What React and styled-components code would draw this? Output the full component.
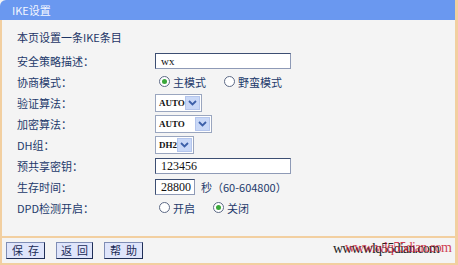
import React from "react";
import styled, { createGlobalStyle } from "styled-components";

const Global = createGlobalStyle`
  html, body { margin: 0; padding: 0; background: #f4f4f4; }
  body { font-family: "Noto Sans CJK SC", "Liberation Sans", sans-serif; }
`;

const Frame = styled.div`
  width: 458px;
  height: 265px;
  box-sizing: border-box;
  display: flex;
  flex-direction: column;
  background: #f4f4f4;
  border-right: 3px solid #f2cfa0;
  border-bottom: 2px solid #f2cfa0;
  overflow: hidden;
`;

const Header = styled.div`
  height: 20px;
  flex: none;
  background: #6a98f0;
  border-top-left-radius: 6px;
  color: #f4f7ff;
  font-size: 11px;
  line-height: 20px;
  padding-left: 12px;
`;

const Body = styled.div`
  flex: 1;
  border-left: 2px solid #f2cfa0;
  display: flex;
  flex-direction: column;
`;

const Content = styled.div`
  flex: 1;
  padding: 7px 0 0 15px;
`;

const Intro = styled.div`
  font-size: 11px;
  color: #1d3566;
  height: 20px;
  line-height: 20px;
  margin-bottom: 3px;
`;

const Form = styled.div`
  display: grid;
  grid-template-columns: 138px 1fr;
  grid-auto-rows: 21px;
  align-items: center;
`;

const Label = styled.div`
  font-size: 11px;
  color: #23396b;
  white-space: nowrap;
`;

const Cell = styled.div`
  display: flex;
  align-items: center;
  gap: ${(p) => p.$gap || 0}px;
  padding-left: ${(p) => p.$pl || 0}px;
  font-size: 11px;
  color: #23396b;
`;

const TextBox = styled.div`
  width: ${(p) => p.$w}px;
  height: 16px;
  box-sizing: border-box;
  border: 1px solid #3c4e72;
  border-right-color: #8e9ab6;
  border-bottom-color: #8e9ab6;
  background: #fff;
  font-family: "Liberation Serif", serif;
  font-size: ${(p) => p.$fs || 12}px;
  color: #111;
  padding-left: 5px;
  line-height: 14px;
`;

const Select = styled.div`
  width: ${(p) => p.$w}px;
  height: 18px;
  box-sizing: border-box;
  border: 1px solid #9aa6bf;
  background: #fff;
  display: flex;
  align-items: center;
  justify-content: space-between;
  padding: 0 1px 0 3px;
  font-family: "Liberation Serif", serif;
  font-size: 9px;
  font-weight: bold;
  color: #111;
`;

const Arrow = styled.div`
  width: 15px;
  height: 14px;
  background: #c9d8f7;
  border: 1px solid #b4c5ec;
  box-sizing: border-box;
  display: flex;
  align-items: center;
  justify-content: center;
`;

const RadioItem = styled.label`
  display: flex;
  align-items: center;
  gap: 3px;
  font-size: 11px;
  color: #23396b;
`;

const RadioDot = styled.span`
  width: 11px;
  height: 11px;
  box-sizing: border-box;
  border-radius: 50%;
  border: 1px solid #5d6a86;
  background: #fff;
  display: flex;
  align-items: center;
  justify-content: center;
  &::after {
    content: "";
    width: 5px;
    height: 5px;
    border-radius: 50%;
    background: ${(p) => (p.$on ? "#3aa83a" : "transparent")};
  }
`;

const Hint = styled.span`
  font-size: 11px;
  color: #23396b;
`;

const Footer = styled.div`
  height: 25px;
  flex: none;
  border-top: 2px solid #f2cfa0;
  display: flex;
  align-items: center;
  padding-left: 4px;
  gap: 11px;
  position: relative;
`;

const Button = styled.div`
  width: ${(p) => p.$w || 39}px;
  height: 17px;
  box-sizing: border-box;
  background: #dfe5fb;
  border: 1px solid #1f2e57;
  border-top-color: #7f8db5;
  border-left-color: #7f8db5;
  font-size: 11px;
  color: #1b2a55;
  display: flex;
  align-items: center;
  justify-content: center;
  white-space: nowrap;
  letter-spacing: 5px;
  text-indent: 5px;
  line-height: 15px;
`;

const Watermark = styled.div`
  position: absolute;
  right: 16px;
  top: 3px;
  font-family: "Liberation Serif", serif;
  font-size: 14px;
  letter-spacing: -0.8px;
  white-space: nowrap;
`;

const WmBlack = styled.span`
  color: #222;
`;

const WmRed = styled.span`
  position: absolute;
  left: 12px;
  top: -1px;
  color: #c8102e;
  opacity: 0.8;
`;

const ArrowIcon = () => (
  <svg width="9" height="6" viewBox="0 0 9 6">
    <path d="M1 1 L4.5 4.5 L8 1" stroke="#3c5fa8" strokeWidth="1.8" fill="none" />
  </svg>
);

const Radio = ({ on, children }) => (
  <RadioItem>
    <RadioDot $on={on} />
    {children}
  </RadioItem>
);

const Sel = ({ w, value }) => (
  <Select $w={w}>
    {value}
    <Arrow>
      <ArrowIcon />
    </Arrow>
  </Select>
);

export default function App() {
  return (
    <>
      <Global />
      <Frame>
        <Header>IKE设置</Header>
        <Body>
          <Content>
            <Intro>本页设置一条IKE条目</Intro>
            <Form>
              <Label>安全策略描述：</Label>
              <Cell>
                <TextBox $w={136} $fs={11}>wx</TextBox>
              </Cell>
              <Label>协商模式：</Label>
              <Cell $pl={4} $gap={18}>
                <Radio on>主模式</Radio>
                <Radio>野蛮模式</Radio>
              </Cell>
              <Label>验证算法：</Label>
              <Cell>
                <Sel w={47} value="AUTO" />
              </Cell>
              <Label>加密算法：</Label>
              <Cell>
                <Sel w={57} value="AUTO" />
              </Cell>
              <Label>DH组：</Label>
              <Cell>
                <Sel w={39} value="DH2" />
              </Cell>
              <Label>预共享密钥：</Label>
              <Cell>
                <TextBox $w={136}>123456</TextBox>
              </Cell>
              <Label>生存时间：</Label>
              <Cell $gap={6}>
                <TextBox $w={40}>28800</TextBox>
                <Hint>秒（60-604800）</Hint>
              </Cell>
              <Label>DPD检测开启：</Label>
              <Cell $pl={4} $gap={18}>
                <Radio>开启</Radio>
                <Radio on>关闭</Radio>
              </Cell>
            </Form>
          </Content>
          <Footer>
            <Button>保存</Button>
            <Button $w={37}>返回</Button>
            <Button>帮助</Button>
            <Watermark>
              <WmBlack>www.wlq55dian.com</WmBlack>
              <WmRed>www.wlq55dian.com</WmRed>
            </Watermark>
          </Footer>
        </Body>
      </Frame>
    </>
  );
}
